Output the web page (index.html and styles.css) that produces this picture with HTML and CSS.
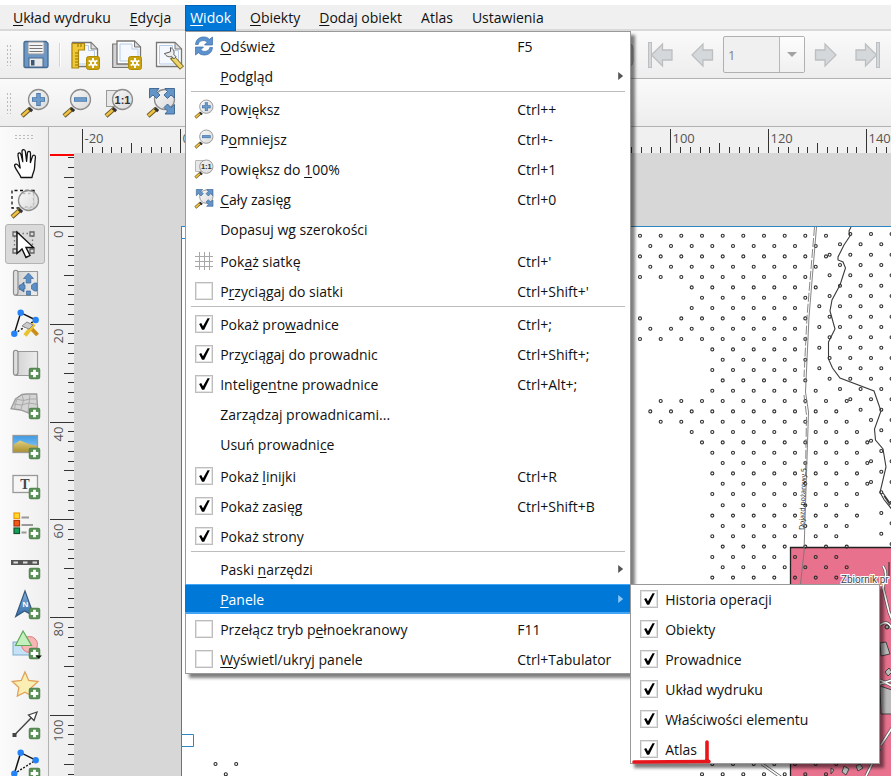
FILE: index.html
```html
<!DOCTYPE html>
<html lang="pl">
<head>
<meta charset="utf-8">
<title>Układ wydruku</title>
<link rel="stylesheet" href="styles.css">
</head>
<body>
<svg class="defs" aria-hidden="true">
  <defs>
    <linearGradient id="lens" x1="0" y1="0" x2="1" y2="1"><stop offset="0" stop-color="#f8f8f8"/><stop offset="1" stop-color="#d6d6d6"/></linearGradient>
    <linearGradient id="paper" x1="0" y1="0" x2="1" y2="0"><stop offset="0" stop-color="#d2d2d2"/><stop offset="1" stop-color="#eeeeee"/></linearGradient>
    <linearGradient id="sky" x1="0" y1="0" x2="0" y2="1"><stop offset="0" stop-color="#3a9ae6"/><stop offset="1" stop-color="#9fd0f5"/></linearGradient>
    <linearGradient id="sand" x1="0" y1="0" x2="0" y2="1"><stop offset="0" stop-color="#e0cf80"/><stop offset="1" stop-color="#a98e2c"/></linearGradient>
    <linearGradient id="blueArrow" x1="0" y1="0" x2="0" y2="1"><stop offset="0" stop-color="#8db4dc"/><stop offset="1" stop-color="#2f6cab"/></linearGradient>
    <symbol id="plus" viewBox="0 0 12 12"><rect x=".5" y=".5" width="11" height="11" rx="2.2" fill="#5a9057" stroke="#4b8048"/><path d="M6 2.2v7.6M2.2 6h7.6" stroke="#fff" stroke-width="2.8"/></symbol>
    <symbol id="glass" viewBox="0 0 30 30"><path d="M10.5 20.5L2 28" stroke="#6e5a25" stroke-width="4.4"/><path d="M9.5 21.2L2.4 27.6" stroke="#f0c244" stroke-width="2.6"/><path d="M8.8 20.2l3.4 3" stroke="#333" stroke-width="3"/><circle cx="18.5" cy="11.5" r="10" fill="url(#lens)" fill-opacity=".9" stroke="#8d8d8d" stroke-width="1.3"/></symbol>
    <symbol id="zoom-in" viewBox="0 0 30 30"><use href="#glass"/><path d="M18.5 5v13M12 11.5h13" stroke="#3f72a8" stroke-width="4.4"/><path d="M18.5 5.7v11.6M12.7 11.5h11.6" stroke="#6f9cca" stroke-width="2.8"/></symbol>
    <symbol id="zoom-out" viewBox="0 0 30 30"><use href="#glass"/><path d="M12 11.5h13" stroke="#3f72a8" stroke-width="4.4"/><path d="M12.7 11.5h11.6" stroke="#6f9cca" stroke-width="2.8"/></symbol>
    <symbol id="zoom-actual" viewBox="0 0 30 30"><rect x="2.5" y="2.500" width="13" height="16" fill="#e8e8e8" stroke="#999"/><use href="#glass"/><text x="18.5" y="15.500" text-anchor="middle" font-family="Liberation Sans" font-weight="bold" font-size="11" fill="#333">1:1</text></symbol>
    <symbol id="zoom-full" viewBox="0 0 30 30"><use href="#glass"/><g fill="#6594c6" stroke="#39618e" stroke-width=".9"><path d="M3.500 .500h9.500l-2.500 3 3.500 3.500-3.500 3.500-3.500-3.500-3.500 3z"/><path d="M28.500 .500H19l2.500 3L18 7l3.500 3.500L25 7l3.500 3z"/><path d="M28.500 26H19l2.500-3-3.500-3.500 3.500-3.500 3.500 3.500 3.500-3z"/></g></symbol>
    <symbol id="refresh" viewBox="0 0 20 20"><g fill="#5c93cf" stroke="#3c6ea8" stroke-width=".7"><path d="M1.500 8.500C2 3 6 .8 10 1c2.500 0 4.300 1 5.500 2.300L18.500 1v8h-8l2.600-2.700C12 5 10.500 4.400 9 4.600 6 4.700 4.500 6.500 4.200 8.500z"/><path d="M18.500 11.500C18 17 14 19.200 10 19c-2.500 0-4.300-1-5.500-2.300L1.500 19v-8h8l-2.600 2.700C8 15 9.500 15.600 11 15.400c3-.1 4.500-1.900 4.800-3.900z"/></g></symbol>
    <symbol id="grid" viewBox="0 0 20 20"><path d="M5.500 1v18M10.500 1v18M15.500 1v18M1 5.500h18M1 10.500h18M1 15.500h18" stroke="#a8a8a8"/></symbol>
    <symbol id="sheet" viewBox="0 0 30 30"><path d="M2.500 2.500h18.500l6.500 6.500v17.500h-25z" fill="#fff" stroke="#777" stroke-width="1.300"/><path d="M5.500 5.500h13v5h6v13.500h-19z" fill="#f5f9ff" stroke="#b5cbe8"/><path d="M21 2.500v6.500h6.500z" fill="#e0e0e0" stroke="#777"/></symbol>
    <symbol id="spark" viewBox="0 0 14 14"><rect x=".5" y=".5" width="13" height="13" rx="2" fill="#c9a20c" stroke="#b18d05"/><path d="M7 2v10M2.600 4.500l8.800 5M11.400 4.500l-8.800 5" stroke="#fff" stroke-width="1.900"/><circle cx="7" cy="7" r="3" fill="#fff"/><circle cx="7" cy="7" r="1.200" fill="#c9a20c"/></symbol>
    <symbol id="scroll" viewBox="0 0 30 30"><path d="M6 2.500h21.500v24H6z" fill="url(#paper)" stroke="#999" stroke-width="1.200"/><path d="M3.500 3.500c0-3 4.500-3 4.500 0v19.500c0 4-4.500 4-4.500 1z" fill="#dedede" stroke="#8d8d8d" stroke-width="1.200"/></symbol>
    <symbol id="prev" viewBox="0 0 30 30"><path d="M5 15L16 4v6h9.500v10H16v6z" fill="#d5d8da" stroke="#bcbfc1" stroke-width="1.300"/></symbol>
  </defs>
</svg>

<nav class="menubar" aria-label="Menu główne">
  <button class="menubar-item"><u>U</u>kład wydruku</button>
  <button class="menubar-item"><u>E</u>dycja</button>
  <div class="menubar-slot">
    <button class="menubar-item is-open"><u>W</u>idok</button>
    <div class="popup popup-main">
      <ul class="group">
        <li><button class="row"><svg class="row-icon"><use href="#refresh"/></svg><span><u>O</u>dśwież</span><kbd>F5</kbd></button></li>
        <li><button class="row"><i></i><span><u>P</u>odgląd</span><b class="arrow"></b></button></li>
      </ul>
      <hr>
      <ul class="group">
        <li><button class="row"><svg class="row-icon"><use href="#zoom-in"/></svg><span>Pow<u>i</u>ększ</span><kbd>Ctrl++</kbd></button></li>
        <li><button class="row"><svg class="row-icon"><use href="#zoom-out"/></svg><span>P<u>o</u>mniejsz</span><kbd>Ctrl+-</kbd></button></li>
        <li><button class="row"><svg class="row-icon"><use href="#zoom-actual"/></svg><span>Powiększ do <u>1</u>00%</span><kbd>Ctrl+1</kbd></button></li>
        <li><button class="row"><svg class="row-icon"><use href="#zoom-full"/></svg><span><u>C</u>ały zasięg</span><kbd>Ctrl+0</kbd></button></li>
        <li><button class="row"><i></i><span>Dopasuj wg szerokości</span></button></li>
      </ul>
      <ul class="group group-next">
        <li><button class="row"><svg class="row-icon"><use href="#grid"/></svg><span>Pok<u>a</u>ż siatkę</span><kbd>Ctrl+'</kbd></button></li>
        <li><label class="row"><input type="checkbox"><span>P<u>r</u>zyciągaj do siatki</span><kbd>Ctrl+Shift+'</kbd></label></li>
      </ul>
      <hr>
      <ul class="group">
        <li><label class="row"><input type="checkbox" checked><span>Pokaż pro<u>w</u>adnice</span><kbd>Ctrl+;</kbd></label></li>
        <li><label class="row"><input type="checkbox" checked><span>Prz<u>y</u>ciągaj do prowadnic</span><kbd>Ctrl+Shift+;</kbd></label></li>
        <li><label class="row"><input type="checkbox" checked><span>Intelige<u>n</u>tne prowadnice</span><kbd>Ctrl+Alt+;</kbd></label></li>
        <li><button class="row"><i></i><span>Zarządzaj prowadnicami...</span></button></li>
        <li><button class="row"><i></i><span>Usuń prowadni<u>c</u>e</span></button></li>
      </ul>
      <ul class="group group-next">
        <li><label class="row"><input type="checkbox" checked><span>Pokaż <u>l</u>inijki</span><kbd>Ctrl+R</kbd></label></li>
        <li><label class="row"><input type="checkbox" checked><span>Pokaż zasięg</span><kbd>Ctrl+Shift+B</kbd></label></li>
        <li><label class="row"><input type="checkbox" checked><span>Pokaż strony</span></label></li>
      </ul>
      <hr>
      <ul class="group">
        <li><button class="row"><i></i><span>Paski <u>n</u>arzędzi</span><b class="arrow"></b></button></li>
        <li class="has-submenu">
          <button class="row is-active"><i></i><span><u>P</u>anele</span><b class="arrow"></b></button>
          <div class="popup popup-sub">
            <ul class="group">
              <li><label class="row"><input type="checkbox" checked><span>Historia operacji</span></label></li>
              <li><label class="row"><input type="checkbox" checked><span>Obiekty</span></label></li>
              <li><label class="row"><input type="checkbox" checked><span>Prowadnice</span></label></li>
              <li><label class="row"><input type="checkbox" checked><span>Układ wydruku</span></label></li>
              <li><label class="row"><input type="checkbox" checked><span>Właściwości elementu</span></label></li>
              <li><label class="row"><input type="checkbox" checked><span>Atlas</span></label></li>
            </ul>
            <svg class="marker" viewBox="0 0 84 26" aria-hidden="true"><path d="M4 24L79 23.500M77 4v18" fill="none" stroke="#e8161c" stroke-width="3.600" stroke-linecap="round"/></svg>
          </div>
        </li>
        <li><label class="row"><input type="checkbox"><span>Przełącz tryb p<u>e</u>łnoekranowy</span><kbd>F11</kbd></label></li>
        <li><label class="row"><input type="checkbox"><span><u>W</u>yświetl/ukryj panele</span><kbd>Ctrl+Tabulator</kbd></label></li>
      </ul>
    </div>
  </div>
  <button class="menubar-item"><u>O</u>biekty</button>
  <button class="menubar-item"><u>D</u>odaj obiekt</button>
  <button class="menubar-item">Atlas</button>
  <button class="menubar-item">Ustawienia</button>
</nav>

<div class="toolbar">
  <span class="grip"></span>
  <button class="tool" aria-label="Zapisz"><svg viewBox="0 0 30 30"><path d="M4 3q0-1.500 1.500-1.500h20.500l2 2v22.500q0 1.500-1.500 1.500H5.500Q4 27.500 4 26z" fill="#6d97c4" stroke="#44698f" stroke-width="1.300"/><rect x="8" y="2" width="16" height="12" rx="1" fill="#f3f3f3" stroke="#999"/><path d="M9.500 5.500h13M9.500 8.500h13M9.500 11.500h13" stroke="#777" stroke-width="1.200"/><rect x="9" y="18" width="14" height="9" fill="#e8e8e8" stroke="#44698f"/><rect x="11" y="20" width="3.500" height="5.500" fill="#3c5876"/></svg></button>
  <span class="tool-line"></span>
  <button class="tool" aria-label="Nowy układ"><svg viewBox="0 0 30 30"><use href="#sheet"/><path d="M2 3.500h12.500V10H8.500v18H2z" fill="#f0c838" stroke="#a8850c" stroke-width="1.200"/><path d="M5 13h3M5 16h3M5 19h3M5 22h3M5 25h3M8 4v3M11 4v3" stroke="#8d6e05"/><use href="#spark" x="16" y="16" width="14" height="14"/></svg></button>
  <button class="tool" aria-label="Duplikuj układ"><svg viewBox="0 0 30 30"><path d="M.700 4h22v23.500h-22z" fill="#d4d4d4" stroke="#777" stroke-width="1.200"/><path d="M5 1h17.500l6 6v17H5z" fill="#fff" stroke="#777" stroke-width="1.300"/><path d="M8 4h12v5h6v12H8z" fill="#f5f9ff" stroke="#b5cbe8"/><path d="M22.500 1v6h6z" fill="#ddd" stroke="#777"/><use href="#spark" x="16" y="16" width="14" height="14"/></svg></button>
  <button class="tool" aria-label="Menedżer układów"><svg viewBox="0 0 30 30"><use href="#sheet"/><path d="M18 17l10 11" stroke="#7e6a1c" stroke-width="5.500"/><path d="M19 18l8.500 9.400" stroke="#ecd36a" stroke-width="3.600"/><path d="M10.500 13.500c1.500 3 5 4 7 2.800l2.500 2.500 2-2-2.300-2.600c1-2.500-.2-5.700-3.300-6.600l.2 4-2.600 1z" fill="#eee" stroke="#555"/></svg></button>
  <span class="toolbar-space"></span>
  <button class="tool" aria-label="Podgląd atlasu" disabled><svg viewBox="0 0 30 30"><rect x="3" y="4" width="27" height="22" rx="4" fill="#c6c6c6" stroke="#aaa"/></svg></button>
  <button class="tool" aria-label="Pierwszy obiekt" disabled><svg viewBox="0 0 30 30"><rect x="3.500" y="2.500" width="3" height="25" fill="#d5d8da" stroke="#bcbfc1"/><use href="#prev" x="1.500"/></svg></button>
  <button class="tool" aria-label="Poprzedni obiekt" disabled><svg viewBox="0 0 30 30"><use href="#prev"/></svg></button>
  <div class="combo"><input type="text" value="1" aria-label="Numer obiektu"><button aria-label="Wybierz obiekt"><b></b></button></div>
  <button class="tool" aria-label="Następny obiekt" disabled><svg viewBox="0 0 30 30"><use href="#prev" transform="matrix(-1 0 0 1 30 0)"/></svg></button>
  <button class="tool" aria-label="Ostatni obiekt" disabled><svg viewBox="0 0 30 30"><rect x="23.500" y="2.500" width="3" height="25" fill="#d5d8da" stroke="#bcbfc1"/><use href="#prev" transform="matrix(-1 0 0 1 28.500 0)"/></svg></button>
</div>

<div class="toolbar">
  <span class="grip"></span>
  <button class="tool" aria-label="Powiększ"><svg viewBox="0 0 30 30"><use href="#zoom-in"/></svg></button>
  <button class="tool" aria-label="Pomniejsz"><svg viewBox="0 0 30 30"><use href="#zoom-out"/></svg></button>
  <button class="tool" aria-label="Powiększ do 100%"><svg viewBox="0 0 30 30"><use href="#zoom-actual"/></svg></button>
  <button class="tool" aria-label="Cały zasięg"><svg viewBox="0 0 30 30"><use href="#zoom-full"/></svg></button>
</div>

<main class="main">
  <div class="toolbox">
    <span class="grip grip-wide"></span>
    <button class="tool" aria-label="Przesuń"><svg viewBox="0 0 30 30"><path d="M11 28.500C10 25 6 21 4.800 17.500c-.8-2.500 2-3.300 3.400-1.200l2 2.700L8 6.500C7.500 3.600 10.300 3 11 5.700l1.800 7L12 3c-.2-2.900 3-3.100 3.400-.3l1.200 9.600.8-8c.3-2.800 3.200-2.400 3.100.3l-.1 9 2-6c.9-2.300 3.400-1.600 3 .9-.7 5-.5 8-1 11.500-.4 3-2 5-2.400 8.500z" fill="#fff" stroke="#111" stroke-width="1.300" stroke-linejoin="round"/></svg></button>
    <button class="tool" aria-label="Powiększ obszar"><svg viewBox="0 0 30 30"><path d="M24 1.500H2V19h22z" fill="none" stroke="#111" stroke-width="1.300" stroke-dasharray="3 2.500"/><use href="#glass"/><path d="M13 4.500h10.500V18H13" fill="none" stroke="#bbb" stroke-width="1.300" stroke-dasharray="2.500 2.500"/></svg></button>
    <button class="tool is-pressed" aria-label="Zaznacz"><svg viewBox="0 0 30 30"><path d="M4.500 4.500h18v18h-18z" fill="none" stroke="#777" stroke-width="1.300" stroke-dasharray="1.500 2.500"/><g fill="#ddd" stroke="#666" stroke-width="1.300"><path d="M3 3h4v4H3zM20 3h4v4h-4zM3 20h4v4H3zM20 20h4v4h-4z"/></g><path d="M7 3v21.500l5-4.500 4 8.500 4-2-4-8h7.500z" fill="#fff" stroke="#111" stroke-width="1.400"/></svg></button>
    <button class="tool" aria-label="Przesuń zawartość"><svg viewBox="0 0 30 30"><use href="#scroll"/><g fill="#5d8fc4" stroke="#3e6c9c" stroke-width=".7"><path d="M18.500 4l5 5.500h-2.700v4.500h-4.600V9.500h-2.700z"/><path d="M14 13v3h-4.500v4.500H14V23l-4.500-3z"/><path d="M8.500 18l5-4.500v2.500h1.500v4h-1.500v2.500z"/><path d="M27 14v8h-2.500l-3-2v-4l3-2z"/><path d="M16.500 22h4v4h-4z"/></g></svg></button>
    <button class="tool" aria-label="Edytuj węzły"><svg viewBox="0 0 30 30"><path d="M4.300 24.700L10.700 3.700l15 7.300" fill="none" stroke="#111" stroke-width="1.400"/><path d="M4.300 24.700L25.700 11" stroke="#111" stroke-width="1.400" stroke-dasharray="2 2"/><path d="M19 17l8.500 9" stroke="#c98e18" stroke-width="4"/><path d="M24 15l-9 11.500" stroke="#e8c32d" stroke-width="4"/><path d="M12 17l5-4 6 3-4 4z" fill="#ccc" stroke="#888"/><g fill="#2583f5"><circle cx="10.700" cy="3.700" r="3.200"/><circle cx="25.700" cy="11" r="3.200"/><circle cx="4.300" cy="24.700" r="3.200"/></g></svg></button>
    <button class="tool" aria-label="Dodaj mapę"><svg viewBox="0 0 30 30"><use href="#scroll"/><use href="#plus" x="18.500" y="18.500" width="12" height="12"/></svg></button>
    <button class="tool" aria-label="Dodaj mapę 3D"><svg viewBox="0 0 30 30"><path d="M1 19.700L5.500 10 12 5.500l5-.500h9.700l1 15-9 4-8-3z" fill="#d4d4d4" stroke="#999" stroke-width="1.300"/><path d="M5.500 10l8 1.500 6.500-1.500h7M3 15l8 1 8-2 8.500 1.500M12 5.500l1.500 6-2.500 9M20 5l-.5 5L18 23M6.500 11l-2 8.500" fill="none" stroke="#aaa"/><use href="#plus" x="18.500" y="18.500" width="12" height="12"/></svg></button>
    <button class="tool" aria-label="Dodaj obraz"><svg viewBox="0 0 30 30"><rect x="3" y="6.500" width="24.500" height="17" fill="url(#sky)"/><path d="M3 16l7-4.500L19 15l8.500 2v6.500H3z" fill="url(#sand)"/><rect x="3" y="6.500" width="24.500" height="17" fill="none" stroke="#999" stroke-width="1.300"/><use href="#plus" x="18.500" y="18.500" width="12" height="12"/></svg></button>
    <button class="tool" aria-label="Dodaj etykietę"><svg viewBox="0 0 30 30"><rect x="3" y="6.500" width="24.500" height="17" fill="#f6f6f6" stroke="#999" stroke-width="1.300"/><text x="15" y="19.500" text-anchor="middle" font-family="Liberation Serif" font-size="14" font-weight="bold" fill="#444">T</text><use href="#plus" x="18.500" y="18.500" width="12" height="12"/></svg></button>
    <button class="tool" aria-label="Dodaj legendę"><svg viewBox="0 0 30 30"><rect x="4" y="4" width="5.500" height="5.500" fill="#ffd92e" stroke="#f29a00" stroke-width="1.200"/><rect x="4" y="11.500" width="5.500" height="5.500" fill="#f25a1a" stroke="#b33505" stroke-width="1.200"/><rect x="4" y="19" width="5.500" height="5.500" fill="#12a35a" stroke="#17502f" stroke-width="1.200"/><path d="M11.500 8.500h7.500M11.500 16h11.500M11.500 23.500h5" stroke="#999" stroke-width="2"/><use href="#plus" x="18.500" y="18.500" width="12" height="12"/></svg></button>
    <button class="tool" aria-label="Dodaj podziałkę"><svg viewBox="0 0 30 30"><rect x="1.500" y="11.500" width="27" height="4" fill="#555" stroke="#555"/><path d="M3.500 13.500h4.500M13 13.500h4.500M22.500 13.500h4.500" stroke="#ddd" stroke-width="2"/><use href="#plus" x="18.500" y="18.500" width="12" height="12"/></svg></button>
    <button class="tool" aria-label="Dodaj strzałkę północy"><svg viewBox="0 0 30 30"><path d="M15 2L5.700 27.500 14.500 22l9.500 5z" fill="url(#blueArrow)" stroke="#34597f" stroke-width="1.200"/><text x="15.500" y="18" text-anchor="middle" font-family="Liberation Sans" font-size="8" font-weight="bold" fill="#fff">N</text><use href="#plus" x="18.500" y="18.500" width="12" height="12"/></svg></button>
    <button class="tool" aria-label="Dodaj kształt"><svg viewBox="0 0 30 30"><rect x="3" y="13" width="17" height="13" fill="#c5e1f5" stroke="#7fabcf"/><circle cx="19.500" cy="15.500" r="8" fill="#f7b5b5" stroke="#e07b7b"/><path d="M13 2L5.500 16.500h16z" fill="#c4f0bd" stroke="#5faa5a" stroke-width="1.200"/><use href="#plus" x="18.500" y="18.500" width="12" height="12"/><path d="M25.500 26.500H32l-3.300 3z" fill="#111"/></svg></button>
    <button class="tool" aria-label="Dodaj znacznik"><svg viewBox="0 0 30 30"><path d="M15 3l3.700 8.500 9.300 1-6.800 6.300 2 9L15 23.200 7.300 27l1.500-8.500L2.300 12.500l9-1z" fill="#fbeeb2" stroke="#e0a25a" stroke-width="1.300"/><use href="#plus" x="18.500" y="18.500" width="12" height="12"/></svg></button>
    <button class="tool" aria-label="Dodaj strzałkę"><svg viewBox="0 0 30 30"><path d="M4.500 26L22 8" stroke="#444" stroke-width="1.400"/><path d="M27 3l-8.500 3 5.500 5.500z" fill="#fff" stroke="#444" stroke-width="1.300"/><path d="M2.500 24h4v4h-4z" fill="#444"/><use href="#plus" x="18.500" y="18.500" width="12" height="12"/></svg></button>
    <button class="tool" aria-label="Dodaj węzły"><svg viewBox="0 0 30 30"><path d="M4.300 24.700L10.700 3.700l15 7.500" fill="none" stroke="#111" stroke-width="1.500"/><path d="M4.300 24.700L25.700 11.200" stroke="#111" stroke-width="1.400" stroke-dasharray="2 1.500"/><g fill="#2583f5"><circle cx="10.700" cy="3.700" r="3.200"/><circle cx="25.700" cy="11.200" r="3.200"/><circle cx="4.300" cy="24.700" r="3.200"/></g><use href="#plus" x="18.500" y="18.500" width="12" height="12"/></svg></button>
  </div>

  <div class="workspace">
    <svg class="ruler ruler-top" id="ruler-top"></svg>
    <svg class="ruler ruler-left" id="ruler-left"></svg>
    <svg class="canvas" id="canvas">
      <g transform="translate(-74 -153)">
        <rect x="181.500" y="226.500" width="1500" height="1100" fill="#fff" stroke="#2e86c1"/>
        <path d="M790.500 1000V547.500H1400V1000z" fill="#e8718d" stroke="#222" stroke-width="1.300"/>
        <g fill="none" stroke="#555" stroke-width="3"><path d="M883 566q4 6 2 12l-2 10 6 24 4 10M880 625q8-6 12 4M880 684l12-4M892 728L881 745M880 680l12 6M866 776l14-28M762 764l20 14"/></g>
        <g fill="none" stroke="#fff" stroke-width="1.600"><path d="M883 566q4 6 2 12l-2 10 6 24 4 10M880 625q8-6 12 4M880 684l12-4M892 728L881 745M880 680l12 6M866 776l14-28M762 764l20 14"/></g>
        <g fill="#bbb" stroke="#444"><path d="M880 643l6-1 4 12-9 2zM885 672l4-4 3 4-4 4zM880 686l12 4v24h-11zM844 766l5 3-3 6-4-3zM856 766l4-2 3 4-5 3zM831 768l3 2-3 4z"/></g>
        <circle cx="887" cy="627" r="2" fill="#999" stroke="#222"/>
        <path d="M889 562v14" fill="none" stroke="#222"/>
        <g id="dots" fill="none" stroke="#2d2d2d" stroke-width="1.100"></g>
        <g fill="none" stroke="#777" stroke-width=".9"><path d="M816.500 227L809 317l-3.500 75 3 20L804 552l-3.500 32"/><path d="M814.500 227L807 317l-3 60" stroke-dasharray="9 2"/><path d="M804 395l2.500 20-1 60" stroke-dasharray="9 2"/></g>
        <path d="M851 227l-2 4 1 5-6 9-6 12v3l5 2 2.500 6-5.500 17-8 15-2 11 5 18-6.500 13v17l4 9 7.500 10 34 13 7 20-6.500 18 1 11 7.500 9 3 18-6 25.500 4 7 8 10M884 496l6 9M883 493l7 10" fill="none" stroke="#3a3a3a" stroke-width="1.100"/>
        <text transform="translate(804 530) rotate(-88)" class="map-note">Dojazd pożarowy 5</text>
        <text x="841" y="583" class="map-label">Zbiornik pr</text>
        <g fill="#fff" stroke="#2e86c1"><path d="M181.500 226.500h12v12h-12zM181.500 734.500h12v12h-12z"/></g>
      </g>
    </svg>
  </div>
</main>
<script src="app.js"></script>
</body>
</html>
```
FILE: styles.css
```css
* { box-sizing: border-box; }

body {
  margin: 0;
  padding-top: 5px;
  height: 100vh;
  display: flex;
  flex-direction: column;
  overflow: hidden;
  background: #fff;
  color: #111;
  font: 14px/20px "Open Sans", "Noto Sans", sans-serif;
}

button, input, kbd { font: inherit; color: inherit; }
button { border: 0; padding: 0; background: none; text-align: left; }
u { text-decoration: underline; text-underline-offset: 2px; text-decoration-thickness: 1px; }
.defs { position: absolute; width: 0; height: 0; }

/* Menu bar */
.menubar {
  display: flex;
  flex: none;
  gap: 9px;
  height: 26px;
  padding-left: 8px;
  background: #f0f0f0;
  box-shadow: inset 0 -2px #d9d9d9;
}
.menubar-slot { position: relative; }
.menubar-item { height: 26px; padding: 0 5px; white-space: nowrap; }
.menubar-item.is-open { background: #0078d7; color: #fff; outline: 1px solid #0063b8; outline-offset: -1px; }

/* Popup menus */
.popup {
  position: absolute;
  background: #fff;
  color: #111;
  outline: 1px solid #999;
  outline-offset: -1px;
  box-shadow: 4px 4px 3px rgba(0, 0, 0, .5);
}
.popup-main { z-index: 10; top: 26px; left: 0; width: 446px; }
.popup-sub { z-index: 11; top: 0; left: 445px; width: 250px; }
.group { margin: 0; padding: 0; list-style: none; }
.group-next { margin-top: 2px; }
.popup hr { height: 1px; margin: 0 6px 2px; border: 0; background: #bdbdbd; }
.has-submenu { position: relative; }
.row {
  display: grid;
  grid-template-columns: 20px 1fr 106px;
  column-gap: 6px;
  align-items: center;
  width: 100%;
  height: 30px;
  padding: 0 8px 0 9px;
  white-space: nowrap;
}
.row span, .row kbd { padding-top: 2px; }
.popup-sub .row { grid-template-columns: 20px 1fr; }
.row.is-active { background: #0078d7; color: #fff; box-shadow: inset 0 1px #42a5f5, inset 0 -2px #42a5f5; }
.row-icon { width: 20px; height: 20px; }
.arrow {
  justify-self: end;
  width: 5px;
  height: 8px;
  background: #555;
  clip-path: polygon(0 0, 100% 50%, 0 100%);
}
.is-active .arrow { background: #8cc8f5; }
.row input {
  appearance: none;
  width: 18px;
  height: 18px;
  margin: 0 1px;
  border: 1px solid #bdbdbd;
  box-shadow: inset 0 0 0 1px #e4e4e4;
  background: #fff;
}
.row input:checked::before {
  content: "";
  display: block;
  width: 12px;
  height: 12px;
  margin: 2px;
  background: #000;
  clip-path: polygon(8% 50%, 25% 42%, 40% 68%, 78% 2%, 97% 2%, 50% 98%, 32% 98%);
}
.marker { position: absolute; left: 0; bottom: 0; width: 84px; height: 26px; overflow: visible; }

/* Toolbars */
.toolbar {
  display: flex;
  flex: none;
  align-items: center;
  height: 48px;
  padding-left: 6px;
  border-bottom: 1px solid #b2b2b2;
  background: linear-gradient(#fafafa, #ededed);
}
.grip {
  width: 6px;
  height: 22px;
  margin-right: 2px;
  background: radial-gradient(circle, #bbb 1px, transparent 1px) 0 0 / 3px 4px;
}
.tool { display: flex; flex: none; align-items: center; justify-content: center; width: 42px; height: 40px; }
.tool svg { width: 30px; height: 30px; overflow: visible; }
.tool-line { width: 2px; height: 24px; margin: 0 3px; background: #d4d4d4; border-right: 1px solid #fff; }
.toolbar-space { flex: none; width: 407px; }
.combo {
  display: flex;
  flex: none;
  width: 82px;
  height: 37px;
  border: 1px solid #b0b0b0;
  border-radius: 2px;
  background: #f0f0f0;
}
.combo input { width: 56px; padding: 0 4px; border: 0; border-right: 1px solid #b8b8b8; background: none; color: #858585; font-size: 13px; outline: 0; }
.combo button { flex: 1; display: flex; align-items: center; justify-content: center; background: linear-gradient(#fdfdfd, #f0f0f0); }
.combo b { width: 10px; height: 5px; background: #a2a2a2; clip-path: polygon(0 0, 100% 0, 50% 100%); }

/* Work area */
.main { display: grid; flex: 1; min-height: 0; grid-template-columns: 49px 1fr; }
.toolbox {
  display: flex;
  flex-direction: column;
  align-items: center;
  min-height: 0;
  overflow: hidden;
  border-right: 1px solid #b2b2b2;
  background: linear-gradient(90deg, #fbfbfb, #efefef);
}
.toolbox .tool { width: 40px; margin-right: -2px; margin-left: 0; }
.toolbox .is-pressed { border: 1px solid #b4b4b4; border-radius: 3px; background: #dadada; }
.grip-wide { flex: none; width: 21px; height: 6px; margin: 7px 0 4px; background-size: 4px 3px; }
.workspace {
  display: grid;
  grid-template: 26px 1fr / 25px 1fr;
  min-width: 0;
  min-height: 0;
  background: #d7d7d7;
}
.ruler { display: block; width: 100%; height: 100%; background: #f0f0f0; }
.ruler-top { grid-column: 1 / -1; }
.ruler path { stroke: #333; fill: none; shape-rendering: crispEdges; }
.ruler text { font-size: 13px; fill: #555; }
.ruler .cursor-mark { stroke: #f00; stroke-width: 2; }
.canvas { display: block; width: 100%; height: 100%; min-height: 0; }
.map-note { font-size: 7px; fill: #111; }
.map-label { font-family: Roboto, sans-serif; font-size: 10px; fill: #444; stroke: #fff; stroke-width: 2px; paint-order: stroke; }
```
FILE: app.js
```js
const NS = "http://www.w3.org/2000/svg";

function add(parent, name, attrs, text) {
  const node = document.createElementNS(NS, name);
  for (const key in attrs) node.setAttribute(key, attrs[key]);
  if (text !== undefined) node.textContent = text;
  parent.appendChild(node);
}

// Horizontal ruler, one tick for every two units, as far as the ruler reaches
const top_ = document.getElementById("ruler-top");
const topLength = top_.getBoundingClientRect().width;
for (let u = -20; 131.6 + u * 4.9 < topLength; u += 2) {
  const x = Math.floor(131.6 + u * 4.9) + 0.5;
  const start = u % 20 === 0 ? 2 : u % 10 === 0 ? 16 : 20;
  add(top_, "path", { d: `M${x} ${start}V26` });
  if (u % 20 === 0) add(top_, "text", { x: x + 2, y: 16 }, u);
}

// Vertical ruler
const left = document.getElementById("ruler-left");
const leftLength = left.getBoundingClientRect().height;
for (let u = -14; 73.4 + u * 4.89 < leftLength; u += 2) {
  const y = Math.floor(73.4 + u * 4.89) + 0.5;
  const start = u % 20 === 0 ? 1 : u % 10 === 0 ? 15 : 19;
  add(left, "path", { d: `M${start} ${y}H25` });
  if (u % 20 === 0) {
    add(left, "text", { transform: `translate(14 ${y + 4}) rotate(-90)`, "text-anchor": "end" }, u);
  }
}
add(left, "path", { d: "M1 2H25", class: "cursor-mark" });

// Vegetation symbols: first and last column of each staggered row
const dots = document.getElementById("dots");
const STEP = 10.333;
function plant(x0, y0, rows) {
  rows.forEach(([first, last, skip], k) => {
    for (let c = first; c <= last; c += 2) {
      if (c === skip) continue;
      add(dots, "circle", { cx: (x0 + c * STEP).toFixed(1), cy: (y0 + k * STEP).toFixed(1), r: 1.5 });
    }
  });
}
plant(640, 235.7, [
  [0, 18], [1, 17], [0, 18], [1, 17], [0, 16], [5, 17], [6, 16], [5, 15], [0, 16, 2], [1, 15], [0, 16],
  [7, 15], [8, 16], [7, 15], [8, 16], [7, 17], [2, 20], [1, 19], [2, 20], [5, 21], [6, 22], [7, 21],
  [8, 22], [7, 21], [8, 22], [7, 21]
]);
plant(640, 505.3, [
  [8, 20], [7, 21], [8, 20], [7, 19], [8, 20], [7, 19], [8, 20], [7, 19]
]);
plant(640, 764, [[7, 19], [6, 18]]);
plant(819.3, 234, [
  [3, 7], [2, 6], [1, 7], [2, 6], [1, 7], [2, 6], [1, 7], [0, 6], [1, 7], [0, 6], [1, 7], [0, 6], [1, 7],
  [0, 6], [1, 7], [2, 6], [3, 7], [4, 6], [5, 7], [6, 6], [5, 7], [6, 6], [5, 7], [6, 6], [5, 7], [6, 6],
  [7, 7], [6, 6], [7, 7], [6, 6], [7, 7]
]);
plant(215.5, 764, [[0, 2], [1, 1]]);
```
